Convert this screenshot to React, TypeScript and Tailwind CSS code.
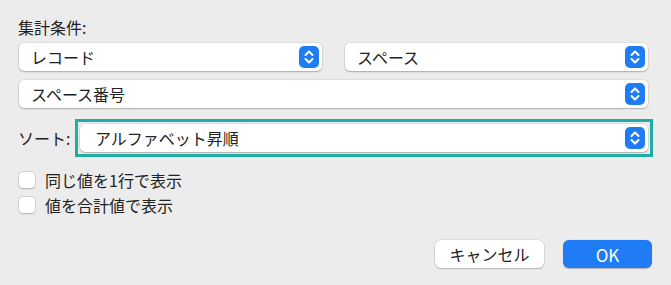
import type { ReactNode } from 'react'

function Stepper() {
  return (
    <div className="flex h-[22px] w-[20px] shrink-0 items-center justify-center rounded-[5px] bg-[#1f7cf4]">
      <svg width="20" height="22" viewBox="0 0 20 22" fill="none">
        <path d="M6.5 9 L10 5.5 L13.5 9" stroke="white" strokeWidth="2" strokeLinecap="round" strokeLinejoin="round" />
        <path d="M6.5 13 L10 16.5 L13.5 13" stroke="white" strokeWidth="2" strokeLinecap="round" strokeLinejoin="round" />
      </svg>
    </div>
  )
}

function Popup({ label, className = '' }: { label: string; className?: string }) {
  return (
    <div
      className={`flex h-[28px] items-center justify-between rounded-[5px] bg-white pl-3 pr-[3px] shadow-[0_0_0_0.5px_rgba(0,0,0,0.12),0_1px_1.5px_rgba(0,0,0,0.22)] ${className}`}
    >
      <span className="text-[16px] leading-none text-[#222]">{label}</span>
      <Stepper />
    </div>
  )
}

function Checkbox({ children }: { children: ReactNode }) {
  return (
    <div className="flex h-[20px] items-center gap-[10px] pl-px">
      <div className="h-[16px] w-[16px] rounded-[4px] bg-white shadow-[0_0_0_0.5px_rgba(0,0,0,0.15),0_0.5px_1.5px_rgba(0,0,0,0.2)]" />
      <span className="text-[16px] leading-none text-[#222]">{children}</span>
    </div>
  )
}

export default function App() {
  return (
    <div className="flex h-[285px] w-[671px] flex-col bg-[#ececec] pl-[18px] pr-[19px] pt-[18px] font-['Noto_Sans_CJK_JP','Liberation_Sans',sans-serif]">
      <div className="text-[16px] leading-[18px] text-[#222]">集計条件:</div>

      <div className="ml-px mr-[4px] mt-[7px] grid grid-cols-2 gap-[23px]">
        <Popup label="レコード" />
        <Popup label="スペース" />
      </div>

      <div className="ml-px mr-[4px] mt-[9px]">
        <Popup label="スペース番号" />
      </div>

      <div className="mr-[4px] mt-[16px] flex items-center">
        <div className="w-[62px] text-[16px] leading-none text-[#222]">ソート:</div>
        <div className="flex-1 outline-[3px] outline-offset-2 outline-[#1fada4] outline-solid">
          <Popup label="アルファベット昇順" className="pl-[15px]" />
        </div>
      </div>

      <div className="mt-[18px] flex flex-col gap-[5px]">
        <Checkbox>同じ値を1行で表示</Checkbox>
        <Checkbox>値を合計値で表示</Checkbox>
      </div>

      <div className="mt-[25px] flex justify-end gap-[19px]">
        <button className="h-[28px] w-[109px] rounded-[6px] bg-white text-[16px] leading-none text-[#222] shadow-[0_0_0_0.5px_rgba(0,0,0,0.12),0_1px_1.5px_rgba(0,0,0,0.2)]">
          キャンセル
        </button>
        <button className="h-[28px] w-[89px] rounded-[6px] bg-[#1f7cf4] text-[17px] leading-none text-white shadow-[0_0.5px_1px_rgba(0,0,0,0.25)]">
          OK
        </button>
      </div>
    </div>
  )
}
